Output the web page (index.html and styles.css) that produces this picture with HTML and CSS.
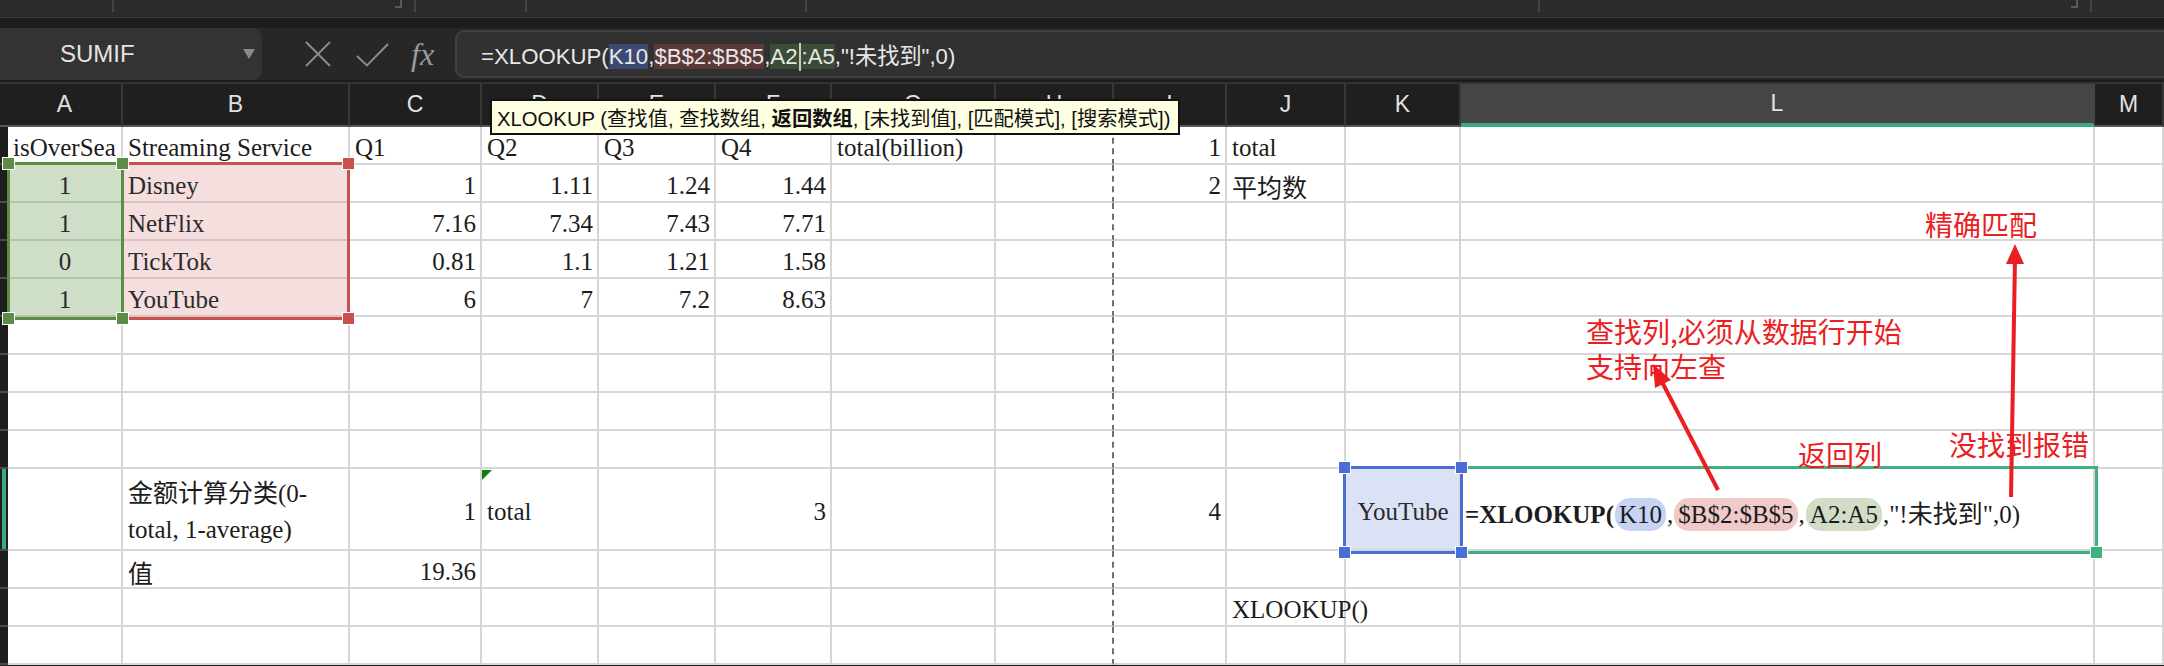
FILE: index.html
```html
<!DOCTYPE html>
<html lang="zh-CN">
<head>
<meta charset="utf-8">
<title>XLOOKUP 示例</title>
<link rel="stylesheet" href="styles.css">
</head>
<body>
<div class="app">
  <div class="topstrip">
    <div class="seg s1"></div>
    <div class="seg s2"><span class="cmark"></span></div>
    <div class="seg s3"></div>
    <div class="seg s4"></div>
    <div class="seg s5"></div>
    <div class="seg s6"><span class="cmark"></span></div>
    <div class="seg s7"></div>
  </div>
  <div class="gapband"></div>
  <div class="formulabar">
    <div class="namebox"><span class="name">SUMIF</span><span class="dd"></span></div>
    <div class="fbtns">
      <svg class="ic-x" width="26" height="26" viewBox="0 0 26 26"><path d="M1 1 L25 25 M25 1 L1 25" stroke="#8d8d8d" stroke-width="1.8" fill="none"/></svg>
      <svg class="ic-ok" width="33" height="24" viewBox="0 0 33 24"><path d="M1 13 L11 22.5 L32 1" stroke="#8d8d8d" stroke-width="1.9" fill="none" stroke-linejoin="miter"/></svg>
      <span class="fx">fx</span>
    </div>
    <div class="finput"><span class="ftext">=XLOOKUP(<span class="fh-b">K10</span>,<span class="fh-r">$B$2:$B$5</span>,<span class="fh-g">A2<i class="caret"></i>:A5</span>,"!未找到",0)</span></div>
  </div>
  <div class="sep"></div>
  <div class="sheet">
    <div class="grid">
      <div class="row">
        <div class="hc"></div>
        <div class="ch">A</div><div class="ch">B</div><div class="ch">C</div><div class="ch">D</div><div class="ch">E</div><div class="ch">F</div><div class="ch">G</div><div class="ch">H</div><div class="ch">I</div><div class="ch">J</div><div class="ch">K</div><div class="ch sel">L</div><div class="ch">M</div>
      </div>
      <div class="row">
        <div class="rh"></div>
        <div class="c">isOverSea</div><div class="c">Streaming Service</div><div class="c">Q1</div><div class="c">Q2</div><div class="c">Q3</div><div class="c">Q4</div><div class="c">total(billion)</div><div class="c pb"></div><div class="c r">1</div><div class="c">total</div><div class="c"></div><div class="c"></div><div class="c"></div>
      </div>
      <div class="row">
        <div class="rh"></div>
        <div class="c m gf">1</div><div class="c pf">Disney</div><div class="c r">1</div><div class="c r">1.11</div><div class="c r">1.24</div><div class="c r">1.44</div><div class="c"></div><div class="c pb"></div><div class="c r">2</div><div class="c">平均数</div><div class="c"></div><div class="c"></div><div class="c"></div>
      </div>
      <div class="row">
        <div class="rh"></div>
        <div class="c m gf">1</div><div class="c pf">NetFlix</div><div class="c r">7.16</div><div class="c r">7.34</div><div class="c r">7.43</div><div class="c r">7.71</div><div class="c"></div><div class="c pb"></div><div class="c"></div><div class="c"></div><div class="c"></div><div class="c"></div><div class="c"></div>
      </div>
      <div class="row">
        <div class="rh"></div>
        <div class="c m gf">0</div><div class="c pf">TickTok</div><div class="c r">0.81</div><div class="c r">1.1</div><div class="c r">1.21</div><div class="c r">1.58</div><div class="c"></div><div class="c pb"></div><div class="c"></div><div class="c"></div><div class="c"></div><div class="c"></div><div class="c"></div>
      </div>
      <div class="row">
        <div class="rh"></div>
        <div class="c m gf">1</div><div class="c pf">YouTube</div><div class="c r">6</div><div class="c r">7</div><div class="c r">7.2</div><div class="c r">8.63</div><div class="c"></div><div class="c pb"></div><div class="c"></div><div class="c"></div><div class="c"></div><div class="c"></div><div class="c"></div>
      </div>
      <div class="row">
        <div class="rh"></div>
        <div class="c"></div><div class="c"></div><div class="c"></div><div class="c"></div><div class="c"></div><div class="c"></div><div class="c"></div><div class="c pb"></div><div class="c"></div><div class="c"></div><div class="c"></div><div class="c"></div><div class="c"></div>
      </div>
      <div class="row">
        <div class="rh"></div>
        <div class="c"></div><div class="c"></div><div class="c"></div><div class="c"></div><div class="c"></div><div class="c"></div><div class="c"></div><div class="c pb"></div><div class="c"></div><div class="c"></div><div class="c"></div><div class="c"></div><div class="c"></div>
      </div>
      <div class="row">
        <div class="rh"></div>
        <div class="c"></div><div class="c"></div><div class="c"></div><div class="c"></div><div class="c"></div><div class="c"></div><div class="c"></div><div class="c pb"></div><div class="c"></div><div class="c"></div><div class="c"></div><div class="c"></div><div class="c"></div>
      </div>
      <div class="row">
        <div class="rh"></div>
        <div class="c"></div><div class="c"></div><div class="c"></div><div class="c"></div><div class="c"></div><div class="c"></div><div class="c"></div><div class="c pb"></div><div class="c"></div><div class="c"></div><div class="c"></div><div class="c"></div><div class="c"></div>
      </div>
      <div class="row">
        <div class="rh act"></div>
        <div class="c"></div><div class="c wrap"><span>金额计算分类(0-<br>total, 1-average)</span></div><div class="c r">1</div><div class="c">total</div><div class="c"></div><div class="c r">3</div><div class="c"></div><div class="c pb"></div><div class="c r">4</div><div class="c"></div><div class="c m bf">YouTube</div><div class="c lf"><span class="expr"><b>=XLOOKUP(</b><span class="pill p-b">K10</span>,<span class="pill p-r">$B$2:$B$5</span>,<span class="pill p-g">A2:A5</span>,"!未找到",0)</span></div><div class="c"></div>
      </div>
      <div class="row">
        <div class="rh"></div>
        <div class="c"></div><div class="c">值</div><div class="c r">19.36</div><div class="c"></div><div class="c"></div><div class="c"></div><div class="c"></div><div class="c pb"></div><div class="c"></div><div class="c"></div><div class="c"></div><div class="c"></div><div class="c"></div>
      </div>
      <div class="row">
        <div class="rh"></div>
        <div class="c"></div><div class="c"></div><div class="c"></div><div class="c"></div><div class="c"></div><div class="c"></div><div class="c"></div><div class="c pb"></div><div class="c"></div><div class="c spill">XLOOKUP()</div><div class="c"></div><div class="c"></div><div class="c"></div>
      </div>
      <div class="row">
        <div class="rh"></div>
        <div class="c"></div><div class="c"></div><div class="c"></div><div class="c"></div><div class="c"></div><div class="c"></div><div class="c"></div><div class="c pb"></div><div class="c"></div><div class="c"></div><div class="c"></div><div class="c"></div><div class="c"></div>
      </div>
    </div>

    <div class="rng rng-r"><i class="hd tr"></i><i class="hd br"></i></div>
    <div class="rng rng-g"><i class="hd tl"></i><i class="hd tr"></i><i class="hd bl"></i><i class="hd br"></i></div>
    <div class="rng rng-l"><i class="hd br"></i></div>
    <div class="rng rng-k"><i class="hd tl"></i><i class="hd tr"></i><i class="hd bl"></i><i class="hd br"></i></div>
    <div class="tri"></div>
  </div>

  <div class="tip">XLOOKUP (查找值, 查找数组, <b>返回数组</b>, [未找到值], [匹配模式], [搜索模式])</div>

  <div class="note n1">精确匹配</div>
  <div class="note n2">查找列,必须从数据行开始<br>支持向左查</div>
  <div class="note n3">返回列</div>
  <div class="note n4">没找到报错</div>

  <svg class="arrows" width="2164" height="666" viewBox="0 0 2164 666">
    <line x1="2011" y1="497" x2="2015" y2="258" stroke="#eb1e23" stroke-width="4"/>
    <polygon points="2015,244 2006,264 2024,264" fill="#eb1e23"/>
    <line x1="1718" y1="490" x2="1661" y2="380" stroke="#eb1e23" stroke-width="4"/>
    <polygon points="1653,364 1671,380 1655,388" fill="#eb1e23"/>
  </svg>
</div>
</body>
</html>
```
FILE: styles.css
```css
* { box-sizing: border-box; }
html, body { margin: 0; padding: 0; }
body {
  width: 2164px;
  height: 666px;
  overflow: hidden;
  background: #1e1e1e;
  font-family: "Liberation Sans", "Noto Sans CJK SC", sans-serif;
}
.app { position: relative; width: 2164px; height: 666px; overflow: hidden; }

/* top toolbar remnant */
.topstrip {
  display: flex;
  height: 18px;
  background: #2b2b2b;
  border-bottom: 1px solid #3d3d3d;
}
.seg {
  height: 12px;
  border-right: 2px solid #444;
  display: flex;
  justify-content: flex-end;
}
.s1 { width: 114px; }
.s2 { width: 302px; }
.s3 { width: 111px; }
.s4 { width: 280px; }
.s5 { width: 733px; }
.s6 { width: 552px; }
.s7 { flex: 1; border-right: 0; }
.cmark {
  width: 7px;
  height: 8px;
  border-right: 2px solid #5a5a5a;
  border-bottom: 2px solid #5a5a5a;
  margin-right: 12px;
}
.gapband { height: 10px; background: #1d1d1d; }

/* formula bar */
.formulabar {
  display: flex;
  align-items: center;
  height: 52px;
  background: #272727;
}
.namebox {
  width: 262px;
  height: 52px;
  background: #333;
  border-radius: 0 10px 10px 0;
  display: flex;
  align-items: center;
}
.name { margin-left: 60px; font-size: 24px; color: #e4e4e4; }
.dd {
  margin-left: auto;
  margin-right: 7px;
  width: 0; height: 0;
  border-left: 6px solid transparent;
  border-right: 6px solid transparent;
  border-top: 10px solid #8a8a8a;
}
.fbtns { display: flex; align-items: center; margin-left: 43px; }
.ic-ok { margin-left: 25px; margin-top: 2px; }
.fx {
  margin-left: 22px;
  font-family: "Liberation Serif", serif;
  font-style: italic;
  font-size: 32px;
  color: #9b9b9b;
  line-height: 1;
}
.finput {
  margin-left: 21px;
  margin-right: -20px;
  flex: 1;
  height: 48px;
  background: #313131;
  border: 2px solid #404040;
  border-radius: 9px;
  display: flex;
  align-items: center;
  padding-left: 24px;
}
.ftext { font-size: 22.2px; color: #e8e8e8; white-space: pre; }
.fh-b { background: #3a4a72; }
.fh-r { background: #5c3939; }
.fh-g { background: #3c4c36; }
.caret {
  display: inline-block;
  width: 2px;
  height: 28px;
  background: #c8c8c8;
  vertical-align: -7px;
  margin: 0 1px;
}
.sep { height: 4px; background: #1c1c1c; border-bottom: 2px solid #333; }

/* sheet */
.sheet { position: relative; }
.grid {
  display: grid;
  grid-template-columns: 8px 115px 227px 132px 117px 117px 116px 164px 118px 113px 119px 115px 634px 69px;
  grid-template-rows: 43px repeat(9, 38px) 82px repeat(3, 38px);
}
.row { display: contents; }
.hc { background: #1f1f1f; border-bottom: 2px solid #585858; }
.ch {
  background: #1f1f1f;
  color: #e2e2e2;
  font-size: 23px;
  display: flex;
  align-items: center;
  justify-content: center;
  border-right: 2px solid #383838;
  border-bottom: 2px solid #585858;
}
.ch.sel { background: #454545; border-bottom: 4px solid #3caa7d; border-right-color: #454545; }
.rh { background: #1e1e1e; border-bottom: 2px solid #4a4a4a; }
.rh.act { background: linear-gradient(90deg, #1e1e1e 0 2px, #3caa7d 2px 6px, #1e1e1e 6px); }

.c {
  background: #fff;
  border-right: 2px solid #d6d6d6;
  border-bottom: 2px solid #d6d6d6;
  font-family: "Liberation Serif", "Noto Sans CJK SC", serif;
  font-size: 25px;
  color: #1c1c1c;
  padding: 6px 4px 0 5px;
  display: flex;
  align-items: center;
  white-space: nowrap;
  overflow: hidden;
}
.r { justify-content: flex-end; }
.m { justify-content: center; }
.pb { border-right: 2px dashed #6f6f6f; }
.gf { background: #cfdec7; border-bottom-color: #b4c5ab; color: #2b2b2b; }
.pf { background: #f5dede; border-bottom-color: #dcc2c2; color: #2b2b2b; }
.bf { background: #dce2f6; color: #2b2b2b; }
.wrap { white-space: normal; line-height: 36px; }
.spill { overflow: visible; position: relative; z-index: 1; }
.lf { padding-left: 4px; overflow: visible; }
.expr { white-space: nowrap; }
.expr b { font-weight: bold; }
.pill {
  display: inline-block;
  padding: 0 4px;
  margin: 0 1px;
  border-radius: 15px;
  line-height: 33px;
}
.p-b { background: #c6d3f2; }
.p-r { background: #f0c9c9; }
.p-g { background: #d1ddc7; }

/* selection overlays */
.rng { position: absolute; border: 3px solid currentColor; pointer-events: none; }
.rng-g { color: #5c8c46; left: 7px; top: 78px; width: 117px; height: 158px; z-index: 3; }
.rng-r { color: #c8504e; left: 121px; top: 78px; width: 229px; height: 158px; z-index: 2; }
.rng-l { color: #3db27f; left: 1460px; top: 382px; width: 638px; height: 88px; z-index: 4; }
.rng-k { color: #4b6ed6; left: 1343px; top: 382px; width: 120px; height: 88px; z-index: 5; }
.hd {
  position: absolute;
  width: 11px;
  height: 11px;
  background: currentColor;
  outline: 1px solid #fff;
}
.tl { left: -7px; top: -7px; }
.tr { right: -7px; top: -7px; }
.bl { left: -7px; bottom: -7px; }
.br { right: -7px; bottom: -7px; }
.tri {
  position: absolute;
  left: 482px;
  top: 386px;
  width: 0; height: 0;
  border-top: 10px solid #137a13;
  border-right: 10px solid transparent;
  z-index: 2;
}

/* tooltip */
.tip {
  position: absolute;
  left: 490px;
  top: 99px;
  width: 690px;
  height: 36px;
  background: #ffffe1;
  border: 2px solid #111;
  color: #111;
  font-size: 20.3px;
  padding-left: 5px;
  display: flex;
  align-items: center;
  white-space: pre;
  z-index: 10;
}
.tip b { font-weight: bold; }

/* annotations */
.note {
  position: absolute;
  color: #eb1e23;
  font-family: "Noto Sans CJK SC", sans-serif;
  font-size: 28px;
  line-height: 28px;
  white-space: nowrap;
  z-index: 20;
}
.n1 { left: 1925px; top: 210px; }
.n2 { left: 1586px; top: 314px; line-height: 35px; }
.n3 { left: 1798px; top: 440px; }
.n4 { left: 1949px; top: 430px; }
.arrows { position: absolute; left: 0; top: 0; pointer-events: none; z-index: 21; }
```
